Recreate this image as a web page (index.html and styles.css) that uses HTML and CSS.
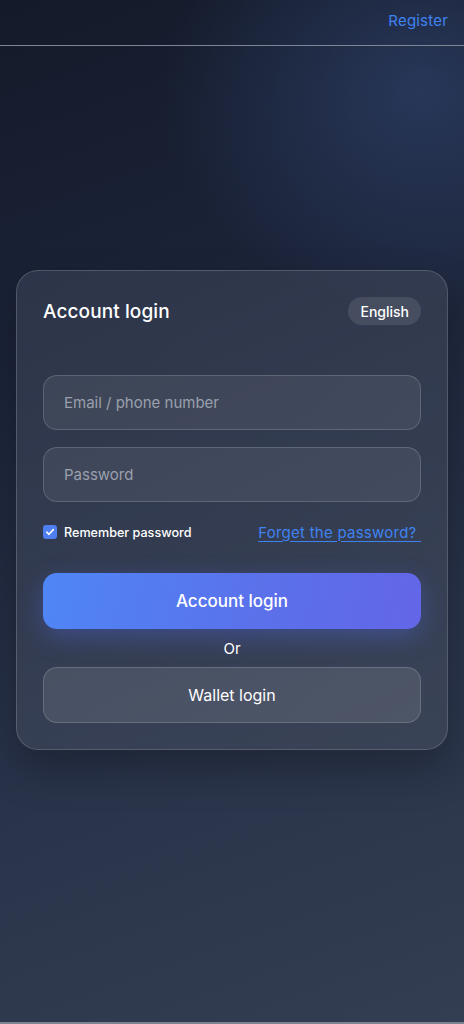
FILE: index.html
```html
<!DOCTYPE html>
<html lang="en">
<head>
<meta charset="utf-8">
<title>Account login</title>
<link rel="stylesheet" href="styles.css">
</head>
<body>
<div class="page">
  <header class="topbar">
    <a class="register" href="#">Register</a>
  </header>
  <main class="main">
    <section class="card">
      <div class="card-head">
        <h1 class="title">Account login</h1>
        <button class="lang">English</button>
      </div>
      <div class="fields">
        <input class="field" type="text" placeholder="Email / phone number">
        <input class="field" type="password" placeholder="Password">
      </div>
      <div class="options">
        <label class="remember">
          <span class="check"><svg width="10" height="10" viewBox="0 0 10 10"><path d="M1.8 5.2 L4 7.3 L8.3 2.6" fill="none" stroke="#fff" stroke-width="1.6" stroke-linecap="round" stroke-linejoin="round"/></svg></span>
          Remember password
        </label>
        <a class="forget" href="#">Forget the password?&nbsp;</a>
      </div>
      <button class="btn-primary">Account login</button>
      <div class="or">Or</div>
      <button class="btn-secondary">Wallet login</button>
    </section>
  </main>
</div>
</body>
</html>
```
FILE: styles.css
```css
* { box-sizing: border-box; }
html, body { margin: 0; padding: 0; }
body {
  font-family: Inter, "Noto Sans", sans-serif;
  color: #fff;
  background: #1e2638;
}
.page {
  height: 1024px;
  display: flex;
  flex-direction: column;
  border-bottom: 2px solid #7d8390;
  background:
    radial-gradient(ellipse 260px 220px at 420px 90px, rgba(52, 74, 120, 0.55), rgba(52, 74, 120, 0) 100%),
    linear-gradient(160deg, #141a29 0%, #1b2338 30%, #283249 65%, #333e52 100%);
}
.topbar {
  height: 46px;
  border-bottom: 1px solid #7f8595;
  display: flex;
  justify-content: flex-end;
  align-items: center;
  padding: 0 16px 4px 0;
}
.register {
  color: #3f83f1;
  font-size: 15px;
  text-decoration: none;
  letter-spacing: 0.2px;
}
.main {
  padding: 224px 16px 0;
}
.card {
  border-radius: 22px;
  border: 1px solid rgba(255, 255, 255, 0.16);
  background: linear-gradient(135deg, rgba(62, 70, 90, 0.55), rgba(70, 78, 96, 0.55));
  box-shadow: 0 20px 40px rgba(0, 0, 0, 0.25);
  padding: 26px 26px 26px;
  display: flex;
  flex-direction: column;
}
.card-head {
  display: flex;
  justify-content: space-between;
  align-items: center;
  height: 28px;
}
.title {
  margin: 0;
  font-size: 19px;
  font-weight: 500;
  letter-spacing: 0.1px;
}
.lang {
  height: 28px;
  padding: 0 12px;
  border: none;
  border-radius: 14px;
  background: rgba(255, 255, 255, 0.1);
  color: #fff;
  font-family: inherit;
  font-size: 14px;
  font-weight: 500;
}
.fields {
  margin-top: 50px;
  display: flex;
  flex-direction: column;
  gap: 17px;
}
.field {
  height: 55px;
  width: 100%;
  border-radius: 14px;
  border: 1px solid rgba(255, 255, 255, 0.16);
  background: rgba(255, 255, 255, 0.07);
  padding: 0 20px;
  font-family: inherit;
  font-size: 15px;
  color: #fff;
  outline: none;
}
.field::placeholder { color: #9aa0ac; }
.options {
  margin-top: 20px;
  height: 20px;
  display: flex;
  justify-content: space-between;
  align-items: center;
}
.remember {
  display: flex;
  align-items: center;
  gap: 7px;
  font-size: 12.6px;
  font-weight: 500;
}
.check {
  width: 14px;
  height: 14px;
  border-radius: 3px;
  background: #4f7ff0;
  display: flex;
  align-items: center;
  justify-content: center;
}
.forget {
  color: #3f83f1;
  font-size: 15px;
  letter-spacing: 0.25px;
  text-decoration: underline;
  text-underline-offset: 3px;
}
.btn-primary {
  margin-top: 31px;
  height: 56px;
  border: none;
  border-radius: 14px;
  background: linear-gradient(100deg, #4f86f6 0%, #5b70ea 60%, #6366e8 100%);
  box-shadow: 0 8px 24px rgba(79, 110, 240, 0.35);
  color: #fff;
  font-family: inherit;
  font-size: 17px;
  font-weight: 500;
}
.or {
  height: 38px;
  display: flex;
  align-items: center;
  justify-content: center;
  font-size: 15px;
}
.btn-secondary {
  height: 56px;
  border-radius: 14px;
  border: 1px solid rgba(255, 255, 255, 0.16);
  background: rgba(255, 255, 255, 0.1);
  color: #fff;
  font-family: inherit;
  font-size: 16px;
  font-weight: 400;
}
```
